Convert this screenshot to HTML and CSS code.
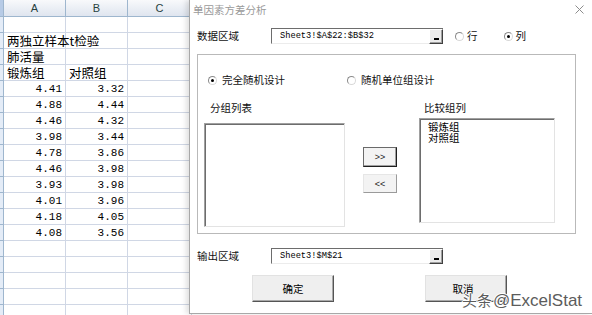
FILE: index.html
```html
<!DOCTYPE html>
<html lang="zh-CN">
<head>
    <meta charset="UTF-8">
    <title>单因素方差分析</title>
    <link rel="stylesheet" href="styles.css">
</head>
<body>
    <div class="sheet">
        <div class="hd corner"></div>
        <div class="hd">A</div>
        <div class="hd">B</div>
        <div class="hd">C</div>

        <div class="rowhd"></div><div class="cell"></div><div class="cell"></div><div class="cell"></div>
        <div class="rowhd"></div><div class="cell">两独立样本t检验</div><div class="cell"></div><div class="cell"></div>
        <div class="rowhd"></div><div class="cell">肺活量</div><div class="cell"></div><div class="cell"></div>
        <div class="rowhd"></div><div class="cell">锻炼组</div><div class="cell">对照组</div><div class="cell"></div>

        <div class="rowhd"></div><div class="cell num">4.41</div><div class="cell num">3.32</div><div class="cell"></div>
        <div class="rowhd"></div><div class="cell num">4.88</div><div class="cell num">4.44</div><div class="cell"></div>
        <div class="rowhd"></div><div class="cell num">4.46</div><div class="cell num">4.32</div><div class="cell"></div>
        <div class="rowhd"></div><div class="cell num">3.98</div><div class="cell num">3.44</div><div class="cell"></div>
        <div class="rowhd"></div><div class="cell num">4.78</div><div class="cell num">3.86</div><div class="cell"></div>
        <div class="rowhd"></div><div class="cell num">4.46</div><div class="cell num">3.98</div><div class="cell"></div>
        <div class="rowhd"></div><div class="cell num">3.93</div><div class="cell num">3.98</div><div class="cell"></div>
        <div class="rowhd"></div><div class="cell num">4.01</div><div class="cell num">3.96</div><div class="cell"></div>
        <div class="rowhd"></div><div class="cell num">4.18</div><div class="cell num">4.05</div><div class="cell"></div>
        <div class="rowhd"></div><div class="cell num">4.08</div><div class="cell num">3.56</div><div class="cell"></div>

        <div class="rowhd"></div><div class="cell"></div><div class="cell"></div><div class="cell"></div>
        <div class="rowhd"></div><div class="cell"></div><div class="cell"></div><div class="cell"></div>
        <div class="rowhd"></div><div class="cell"></div><div class="cell"></div><div class="cell"></div>
        <div class="rowhd"></div><div class="cell"></div><div class="cell"></div><div class="cell"></div>
        <div class="rowhd"></div><div class="cell"></div><div class="cell"></div><div class="cell"></div>
    </div>

    <!-- 对话框窗口 -->
    <div class="dialog">
        <div class="titlebar">
            <span class="title">单因素方差分析</span>
            <svg class="close" width="9" height="9" viewBox="0 0 9 9">
                <path d="M0.5 0.5 L8.5 8.5 M8.5 0.5 L0.5 8.5" stroke="#8c8c8c" stroke-width="1" fill="none"/>
            </svg>
        </div>

        <div class="dlg-body">
            <div class="field">
                <span class="label">数据区域</span>
                <div class="refedit">
                    <span class="reftext">Sheet3!$A$22:$B$32</span>
                    <span class="refbtn"></span>
                </div>
                <span class="radio r-row"><span class="dot"></span>行</span>
                <span class="radio r-col"><span class="dot on"></span>列</span>
            </div>

            <div class="frame">
                <div class="design">
                    <span class="radio wide"><span class="dot on"></span>完全随机设计</span>
                    <span class="radio wide second"><span class="dot"></span>随机单位组设计</span>
                </div>

                <div class="lists">
                    <div class="list-col">
                        <div class="list-label">分组列表</div>
                        <div class="listbox lb-left"></div>
                    </div>
                    <div class="movers">
                        <div class="mover def">&gt;&gt;</div>
                        <div class="mover">&lt;&lt;</div>
                    </div>
                    <div class="list-col">
                        <div class="list-label right">比较组列</div>
                        <div class="listbox lb-right">
                            <div class="item">锻炼组</div>
                            <div class="item">对照组</div>
                        </div>
                    </div>
                </div>
            </div>

            <div class="field out">
                <span class="label">输出区域</span>
                <div class="refedit">
                    <span class="reftext">Sheet3!$M$21</span>
                    <span class="refbtn"></span>
                </div>
            </div>

            <div class="actions">
                <div class="btn">确定</div>
                <div class="btn cancel">取消</div>
            </div>
        </div>
    </div>

    <div class="watermark"><span class="wm-cn">头条</span><span class="wm-en">@ExcelStat</span></div>
</body>
</html>
```

FILE: styles.css
```css
* {
    box-sizing: border-box;
}

body {
    margin: 0;
    width: 592px;
    height: 315px;
    overflow: hidden;
    position: relative;
    background-color: #fff;
    font-family: "Noto Sans CJK SC", sans-serif;
}

/* 表格 */
.sheet {
    display: grid;
    grid-template-columns: 4px 62px 62px 64px;
}

.hd {
    height: 17px;
    border-right: 1px solid #9eb6ce;
    border-bottom: 1px solid #9eb6ce;
    background: linear-gradient(#f8f9fb, #dfe5ef);
    font-family: "Liberation Sans", sans-serif;
    font-size: 11px;
    color: #27413e;
    display: flex;
    align-items: center;
    justify-content: center;
}

.corner {
    background: #b7cbe6;
}

.rowhd {
    height: 16px;
    background-color: #e4ecf7;
    border-right: 1px solid #9eb6ce;
    border-bottom: 1px solid #9eb6ce;
}

.cell {
    height: 16px;
    border-right: 1px solid #d0d7e5;
    border-bottom: 1px solid #d0d7e5;
    padding: 0 2px 0 3px;
    font-size: 12.5px;
    line-height: 16px;
    white-space: nowrap;
    color: #000;
}

.num {
    text-align: right;
    padding-right: 3px;
    font-family: "Liberation Mono", monospace;
    font-size: 11px;
    line-height: 16px;
}

/* 对话框 */
.dialog {
    position: absolute;
    left: 189px;
    top: 0;
    width: 403px;
    height: 314px;
    background-color: #fff;
    border-left: 1px solid #a8a8a8;
    border-bottom: 1px solid #a8a8a8;
    box-shadow: -3px 0 5px rgba(0, 0, 0, 0.12);
    font-size: 10.5px;
    color: #111;
}

.titlebar {
    height: 20px;
    display: flex;
    align-items: center;
    justify-content: space-between;
    padding: 0 8px 2px 3px;
}

.title {
    font-size: 10.5px;
    color: #9a9a9a;
}

.dlg-body {
    padding-left: 7px;
}

.field {
    display: flex;
    align-items: center;
    height: 16px;
    margin-top: 8px;
}

.field.out {
    margin-top: 14px;
}

.label {
    width: 74px;
    line-height: 16px;
}

.refedit {
    width: 172px;
    height: 16px;
    display: flex;
    align-items: center;
    justify-content: space-between;
    border-top: 1px solid #6d6d6d;
    border-left: 1px solid #6d6d6d;
    border-bottom: 1px solid #ececec;
    background-color: #fff;
}

.reftext {
    padding-left: 8px;
    font-family: "Liberation Mono", monospace;
    font-size: 8.7px;
    color: #000;
}

.refbtn {
    position: relative;
    width: 14px;
    height: 15px;
    background-color: #ececec;
    border-top: 1px solid #fff;
    border-left: 1px solid #fff;
    border-right: 1px solid #404040;
    border-bottom: 1px solid #404040;
    box-shadow: inset -1px -1px 0 #a0a0a0;
}

.refbtn::after {
    content: "";
    position: absolute;
    left: 4px;
    bottom: 3px;
    width: 5px;
    height: 2px;
    background-color: #000;
}

.radio {
    display: inline-flex;
    align-items: center;
    gap: 3px;
    line-height: 12px;
}

.r-row {
    margin-left: 12px;
}

.r-col {
    margin-left: 26px;
}

.dot {
    position: relative;
    width: 9px;
    height: 9px;
    border-radius: 50%;
    background-color: #fff;
    border: 1px solid;
    border-color: #8a8a8a #d8d8d8 #d8d8d8 #8a8a8a;
}

.dot.on::after {
    content: "";
    position: absolute;
    left: 2px;
    top: 2px;
    width: 3px;
    height: 3px;
    border-radius: 50%;
    background-color: #000;
}

/* 分组框 */
.frame {
    width: 379px;
    height: 180px;
    margin-top: 10px;
    border: 1px solid #b9b9b9;
}

.design {
    display: flex;
    margin-top: 19px;
    padding-left: 10px;
    height: 12px;
}

.radio.wide {
    gap: 5px;
}

.radio.second {
    margin-left: 62px;
}

.lists {
    display: flex;
    align-items: flex-start;
    margin-top: 16px;
}

.list-col:first-child {
    margin-left: 6px;
}

.list-label {
    padding-left: 6px;
    line-height: 12px;
}

.list-label.right {
    padding-left: 5px;
}

.listbox {
    background-color: #fff;
    border: 1px solid;
    border-color: #a0a0a0 #e3e3e3 #e3e3e3 #a0a0a0;
    box-shadow: inset 1px 1px 0 #6d6d6d;
}

.lb-left {
    width: 141px;
    height: 104px;
    margin-top: 9px;
}

.lb-right {
    width: 136px;
    height: 105px;
    margin-top: 4px;
    padding: 2px 0 0 8px;
}

.item {
    font-size: 10.5px;
    line-height: 11px;
    color: #000;
}

.movers {
    display: flex;
    flex-direction: column;
    gap: 7px;
    margin: 45px 22px 0 18px;
}

.mover {
    width: 34px;
    height: 19px;
    display: flex;
    align-items: center;
    justify-content: center;
    font-family: "Liberation Sans", sans-serif;
    font-size: 9px;
    color: #222;
    background-color: #f3f3f3;
    border: 1px solid;
    border-color: #e6e6e6 #9a9a9a #9a9a9a #e6e6e6;
}

.mover.def {
    height: 20px;
    border-color: #6a6a6a #1e1e1e #1e1e1e #6a6a6a;
    box-shadow: inset -1px -1px 0 #a0a0a0;
}

/* 确定 / 取消 */
.actions {
    display: flex;
    gap: 91px;
    margin: 11px 0 0 55px;
}

.btn {
    width: 82px;
    height: 27px;
    display: flex;
    align-items: center;
    justify-content: center;
    font-size: 10.5px;
    color: #000;
    background-color: #efefef;
    border-top: 1px solid #e2e2e2;
    border-left: 1px solid #e2e2e2;
    border-right: 1px solid #555;
    border-bottom: 1px solid #555;
    box-shadow: inset -1px -1px 0 #a9a9a9;
}

.btn.cancel {
    padding-right: 6px;
}

/* 水印 */
.watermark {
    position: absolute;
    left: 462px;
    top: 287px;
    white-space: nowrap;
    color: #5c5c5c;
    text-shadow: 1px 0 0 #fff, -1px 0 0 #fff, 0 1px 0 #fff, 0 -1px 0 #fff;
}

.wm-cn {
    font-family: "Noto Sans CJK SC", sans-serif;
    font-size: 15px;
    line-height: 20px;
}

.wm-en {
    margin-left: 1px;
    font-family: "Liberation Sans", sans-serif;
    font-size: 17px;
    line-height: 20px;
}
```
